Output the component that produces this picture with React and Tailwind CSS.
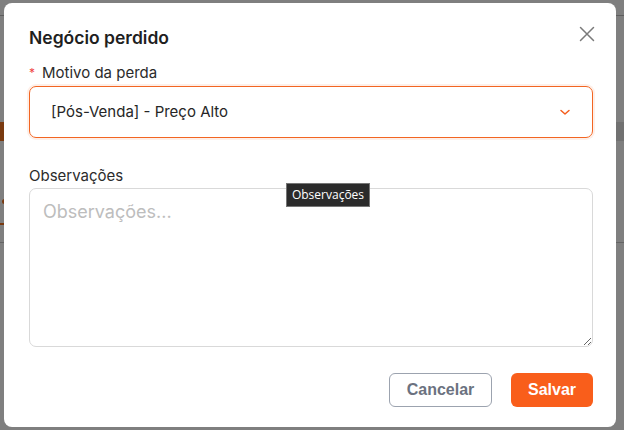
import React from "react";

const ChevronDown = () => (
  <svg width="14" height="14" viewBox="0 0 14 14" fill="none">
    <path d="M3 5.5 L7 9 L11 5.5" stroke="#f45d1c" strokeWidth="1.5" strokeLinecap="round" strokeLinejoin="round" />
  </svg>
);

const CloseIcon = () => (
  <svg width="16" height="16" viewBox="0 0 16 16" fill="none">
    <path d="M1.5 1.5 L14.5 14.5 M14.5 1.5 L1.5 14.5" stroke="#7a7a7a" strokeWidth="1.5" strokeLinecap="round" />
  </svg>
);

const App = () => {
  return (
    <div className="relative w-[624px] h-[430px] overflow-hidden bg-white font-['Inter',sans-serif]">
      {/* page behind the modal */}
      <div className="flex flex-col">
        <div className="h-[15px]" />
        <div className="h-px bg-[#bdbdbd]" />
        <div className="h-[106px]" />
        <div className="flex h-[19px]">
          <div className="w-[40px] bg-[#f47521]" />
          <div className="flex-1 bg-[#e2e2e2]" />
        </div>
        <div className="h-[58px]" />
        <div className="ml-[2px] w-[6px] h-[5px] rounded-full bg-[#f47521]" />
        <div className="h-[19px]" />
        <div className="h-[2px] w-[40px] bg-[#f47521]" />
        <div className="h-[17px]" />
        <div className="h-px bg-[#c8c8c8]" />
      </div>

      {/* overlay */}
      <div className="absolute inset-0 bg-black/50">
        <div className="ml-[4px] mt-[3px] w-[612px] h-[424px] rounded-[8px] bg-white pl-[25px] pr-[23px] pt-[23px] flex flex-col">
          <div className="flex items-start justify-between">
            <h2 className="text-[17.5px] leading-[24px] font-semibold text-[#1f1f1f]">Negócio perdido</h2>
            <button className="mt-0 mr-[-2px]">
              <CloseIcon />
            </button>
          </div>

          <label className="mt-[13px] flex items-center text-[15px] leading-[20px] text-[#2b2b2b]">
            <span className="text-[#ef4444] text-[12px] w-[13px]">*</span>
            Motivo da perda
          </label>
          <div className="mt-[3px] h-[52px] rounded-[7px] border border-[#f26522] shadow-[0_0_0_2px_rgba(245,100,30,0.1)] flex items-center justify-between pl-[21px] pr-[20px]">
            <span className="text-[15px] text-[#262626]">[Pós-Venda] - Preço Alto</span>
            <ChevronDown />
          </div>

          <label className="mt-[28px] text-[15px] leading-[20px] text-[#2b2b2b]">Observações</label>
          <div className="relative mt-[2px]">
            <textarea
              className="block w-full h-[159px] resize-y rounded-[7px] border border-[#d9d9d9] px-[13px] py-[10px] text-[18px] leading-[26px] text-[#262626] placeholder:text-[#bdbdbd] outline-none"
              placeholder="Observações..."
            />
            <div className="absolute left-[257px] top-[-5px] w-[84px] h-[24px] flex items-center justify-center bg-[#2b2b2b] border border-[#767676] text-white text-[12px] font-['Open_Sans',sans-serif]">
              Observações
            </div>
          </div>

          <div className="mt-[26px] flex justify-end gap-[19px] font-['Liberation_Sans',Arial,sans-serif]">
            <button className="w-[103px] h-[34px] rounded-[6px] border border-[#9ca3af] text-[#6b7280] text-[16px] font-bold">
              Cancelar
            </button>
            <button className="w-[82px] h-[34px] rounded-[6px] bg-[#f95e1b] text-white text-[16px] font-bold">
              Salvar
            </button>
          </div>
        </div>
      </div>
    </div>
  );
};

export default App;
